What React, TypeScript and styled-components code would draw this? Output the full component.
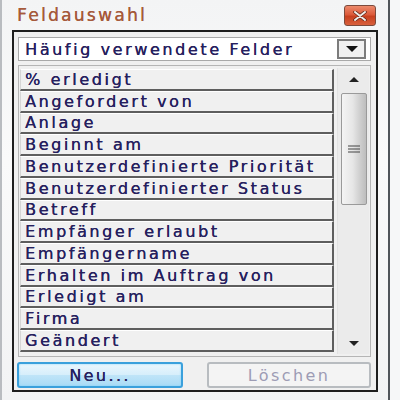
import styled, { createGlobalStyle } from "styled-components"

const GlobalStyle = createGlobalStyle`
    html, body {
        margin: 0;
        padding: 0;
        background: #f6f7f8;
    }
    body {
        width: 400px;
        height: 400px;
        overflow: hidden;
        font-family: "DejaVu Sans", Verdana, sans-serif;
    }
`

const Window = styled.div`
    width: 390px;
    height: 400px;
    box-sizing: border-box;
    border-left: 2px solid #b9bcc0;
    border-right: 2px solid #50555a;
    background: linear-gradient(180deg, #f3f4f5 0%, #fafafa 40%, #f2f3f4 100%);
    display: flex;
    flex-direction: column;
`

const TitleBar = styled.div`
    height: 30px;
    display: flex;
    align-items: flex-start;
    justify-content: space-between;
    padding: 5px 12px 0 15px;
    box-sizing: border-box;
`

const Title = styled.span`
    font-size: 17px;
    letter-spacing: 2.3px;
    color: #a65a3c;
    text-shadow: 0.3px 0 0 #a65a3c;
`

const CloseButton = styled.div`
    width: 32px;
    height: 21px;
    box-sizing: border-box;
    border: 1px solid #7b4a3c;
    border-radius: 3px;
    background: linear-gradient(180deg, #ec8a6c 0%, #dc5a3a 45%, #c8401f 55%, #d8603c 100%);
    display: flex;
    align-items: center;
    justify-content: center;
`

const Frame = styled.div`
    flex: 1;
    margin: 0 10px 8px 10px;
    border: 2px solid #1e1e1e;
    background: #f0f0f0;
    padding: 5px 5px 2px 4px;
    display: flex;
    flex-direction: column;
    gap: 4px;
`

const Combo = styled.div`
    height: 24px;
    box-sizing: border-box;
    border: 1px solid #a9a9a9;
    background: #ffffff;
    display: flex;
    align-items: center;
    justify-content: space-between;
    padding: 0 4px 0 6px;
`

const ItemText = styled.span`
    font-size: 16px;
    letter-spacing: 2.6px;
    color: #26205e;
    text-shadow: 0.3px 0 0 #26205e;
    white-space: nowrap;
`

const ComboButton = styled.div`
    width: 29px;
    height: 20px;
    box-sizing: border-box;
    border: 2px solid #7c7c7c;
    background: #f0f0f0;
    display: flex;
    align-items: center;
    justify-content: center;
`

const ListBox = styled.div`
    flex: 1;
    box-sizing: border-box;
    border: 1px solid #b5b5b5;
    background: #f0f0f0;
    display: flex;
    padding: 2px 1px 2px 1px;
    gap: 3px;
`

const Rows = styled.div`
    flex: 1;
    display: flex;
    flex-direction: column;
    padding-top: 1px;
    min-width: 0;
`

const Row = styled.div`
    height: 21.75px;
    box-sizing: border-box;
    border-top: 1px solid #ffffff;
    border-left: 1px solid #d6d6d6;
    border-bottom: 2px solid #5e5e5e;
    border-right: 2px solid #5e5e5e;
    background: #f0f0f0;
    display: flex;
    align-items: center;
    padding-left: 4px;
    overflow: hidden;
`

const ScrollBar = styled.div`
    width: 31px;
    display: flex;
    flex-direction: column;
    align-items: center;
    background: #ebebeb;
    border-left: 1px solid #e2e2e2;
`

const ArrowBox = styled.div`
    height: 22px;
    width: 100%;
    display: flex;
    align-items: center;
    justify-content: center;
`

const Thumb = styled.div`
    width: 26px;
    height: 112px;
    margin-top: 3px;
    box-sizing: border-box;
    border: 1px solid #9a9a9a;
    border-radius: 2px;
    background: linear-gradient(90deg, #f4f4f4 0%, #e6e6e6 45%, #d2d2d2 70%, #bdbdbd 100%);
    display: flex;
    align-items: center;
    justify-content: center;
`

const Track = styled.div`
    flex: 1;
`

const ButtonRow = styled.div`
    display: flex;
    justify-content: space-between;
    padding: 1px 0 0 0;
`

const DialogButton = styled.div<{ $primary?: boolean }>`
    width: ${p => (p.$primary ? 166 : 164)}px;
    height: 26px;
    box-sizing: border-box;
    border-radius: 3px;
    border: ${p => (p.$primary ? "2px solid #3aa0dc" : "2px solid #b8bcc0")};
    background: ${p => (p.$primary
        ? "linear-gradient(180deg, #eaf6fd 0%, #d6eefb 50%, #bfe4f8 52%, #a9dbf6 100%)"
        : "#f4f4f4")};
    box-shadow: ${p => (p.$primary ? "0 0 2px #7fd0f5 inset" : "none")};
    display: flex;
    align-items: center;
    justify-content: center;
    font-size: 16px;
    letter-spacing: 2.4px;
    color: ${p => (p.$primary ? "#26205e" : "#9d9cb4")};
    text-shadow: ${p => (p.$primary ? "0.3px 0 0 #26205e" : "none")};
    margin-left: ${p => (p.$primary ? "-1px" : "0")};
`

const felder = [
    "% erledigt",
    "Angefordert von",
    "Anlage",
    "Beginnt am",
    "Benutzerdefinierte Priorität",
    "Benutzerdefinierter Status",
    "Betreff",
    "Empfänger erlaubt",
    "Empfängername",
    "Erhalten im Auftrag von",
    "Erledigt am",
    "Firma",
    "Geändert",
]

export default function App() {
    return (
        <>
            <GlobalStyle />
            <Window>
                <TitleBar>
                    <Title>Feldauswahl</Title>
                    <CloseButton>
                        <svg width="14" height="10" viewBox="0 0 14 10">
                            <path d="M2 1 L12 9 M12 1 L2 9" stroke="#5a2418" strokeWidth="3.4" strokeLinecap="round" />
                            <path d="M2 1 L12 9 M12 1 L2 9" stroke="#f2ece8" strokeWidth="2" strokeLinecap="round" />
                        </svg>
                    </CloseButton>
                </TitleBar>
                <Frame>
                    <Combo>
                        <ItemText>Häufig verwendete Felder</ItemText>
                        <ComboButton>
                            <svg width="12" height="6" viewBox="0 0 12 6">
                                <path d="M0 0 H12 L6 6 Z" fill="#111" />
                            </svg>
                        </ComboButton>
                    </Combo>
                    <ListBox>
                        <Rows>
                            {felder.map(f => (
                                <Row key={f}>
                                    <ItemText>{f}</ItemText>
                                </Row>
                            ))}
                        </Rows>
                        <ScrollBar>
                            <ArrowBox>
                                <svg width="10" height="5" viewBox="0 0 10 5">
                                    <path d="M0 5 L5 0 L10 5 Z" fill="#222" />
                                </svg>
                            </ArrowBox>
                            <Thumb>
                                <svg width="12" height="8" viewBox="0 0 12 8">
                                    <path d="M0 1 H12 M0 4 H12 M0 7 H12" stroke="#444" strokeWidth="1.2" />
                                </svg>
                            </Thumb>
                            <Track />
                            <ArrowBox>
                                <svg width="10" height="5" viewBox="0 0 10 5">
                                    <path d="M0 0 H10 L5 5 Z" fill="#222" />
                                </svg>
                            </ArrowBox>
                        </ScrollBar>
                    </ListBox>
                    <ButtonRow>
                        <DialogButton $primary>Neu...</DialogButton>
                        <DialogButton>Löschen</DialogButton>
                    </ButtonRow>
                </Frame>
            </Window>
        </>
    )
}
